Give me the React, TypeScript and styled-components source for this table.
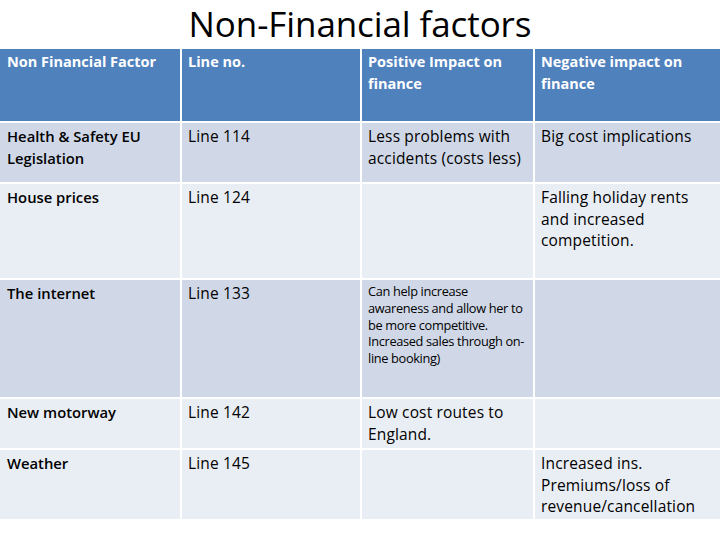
import React from 'react';
import styled, { createGlobalStyle } from 'styled-components';

const GlobalStyle = createGlobalStyle`
  html, body {
    margin: 0;
    padding: 0;
    background: #ffffff;
  }
  body {
    width: 720px;
    height: 540px;
    overflow: hidden;
    font-family: "Open Sans", "Liberation Sans", sans-serif;
  }
`;

const Slide = styled.div`
  width: 720px;
  height: 540px;
  display: flex;
  flex-direction: column;
`;

const Title = styled.h1`
  margin: 0;
  height: 49px;
  line-height: 47px;
  text-align: center;
  font-family: "Open Sans", "Liberation Sans", sans-serif;
  font-weight: 400;
  font-size: 35px;
  color: #000;
  letter-spacing: -0.1px;
`;

const Table = styled.table`
  width: 721px;
  border-collapse: collapse;
  table-layout: fixed;
`;

const HeadCell = styled.th`
  background: #4f81bd;
  color: #fff;
  font-weight: 700;
  font-size: 14.5px;
  line-height: 22px;
  text-align: left;
  vertical-align: top;
  padding: 2px 6px 0 6px;
  height: 70px;
  border: 2px solid #fff;
  border-top: none;
  &:first-child { border-left: none; padding-left: 7px; }
`;

const Cell = styled.td<{ $dark?: boolean; $bold?: boolean; $small?: boolean; $h: number }>`
  background: ${p => (p.$dark ? '#d0d8e8' : '#e9edf4')};
  color: #000;
  font-weight: ${p => (p.$bold ? 600 : 400)};
  font-size: ${p => (p.$small ? '12.8px' : p.$bold ? '14.8px' : '15.5px')};
  line-height: ${p => (p.$small ? '16.8px' : '21.5px')};
  letter-spacing: ${p => (p.$small ? '-0.35px' : p.$bold ? '0' : '0.15px')};
  vertical-align: top;
  padding: 3px 4px 0 6px;
  height: ${p => p.$h}px;
  box-sizing: border-box;
  border: 2px solid #fff;
  &:first-child { border-left: none; padding-left: 7px; }
`;

type Row = {
  factor: string;
  line: string;
  positive: string;
  negative: string;
  dark: boolean;
  h: number;
  smallPositive?: boolean;
};

const rows: Row[] = [
  {
    factor: 'Health & Safety EU Legislation',
    line: 'Line 114',
    positive: 'Less problems with accidents (costs less)',
    negative: 'Big cost implications',
    dark: true,
    h: 61,
  },
  {
    factor: 'House prices',
    line: 'Line 124',
    positive: '',
    negative: 'Falling holiday rents and increased competition.',
    dark: false,
    h: 96,
  },
  {
    factor: 'The internet',
    line: 'Line 133',
    positive:
      'Can help increase awareness and allow her to be more competitive. Increased sales through on-line booking)',
    negative: '',
    dark: true,
    h: 119,
    smallPositive: true,
  },
  {
    factor: 'New motorway',
    line: 'Line 142',
    positive: 'Low cost routes to England.',
    negative: '',
    dark: false,
    h: 51,
  },
  {
    factor: 'Weather',
    line: 'Line 145',
    positive: '',
    negative: 'Increased ins. Premiums/loss of revenue/cancellation',
    dark: false,
    h: 71,
  },
];

export default function App() {
  return (
    <>
      <GlobalStyle />
      <Slide>
        <Title>Non-Financial factors</Title>
        <Table>
          <colgroup>
            <col style={{ width: 181 }} />
            <col style={{ width: 180 }} />
            <col style={{ width: 173 }} />
            <col style={{ width: 187 }} />
          </colgroup>
          <thead>
            <tr>
              <HeadCell>Non Financial Factor</HeadCell>
              <HeadCell>Line no.</HeadCell>
              <HeadCell>Positive Impact on finance</HeadCell>
              <HeadCell>Negative impact on finance</HeadCell>
            </tr>
          </thead>
          <tbody>
            {rows.map(r => (
              <tr key={r.factor}>
                <Cell $dark={r.dark} $bold $h={r.h}>{r.factor}</Cell>
                <Cell $dark={r.dark} $h={r.h}>{r.line}</Cell>
                <Cell $dark={r.dark} $small={r.smallPositive} $h={r.h}>{r.positive}</Cell>
                <Cell $dark={r.dark} $h={r.h}>{r.negative}</Cell>
              </tr>
            ))}
          </tbody>
        </Table>
      </Slide>
    </>
  );
}
